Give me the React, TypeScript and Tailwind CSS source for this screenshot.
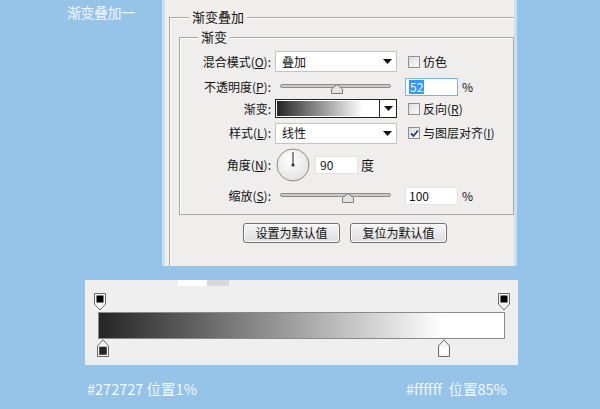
import React from "react";

const ui = { fontFamily: '"Noto Sans CJK SC", "Noto Sans", sans-serif' };

function Arrow() {
  return (
    <svg width="9" height="5" viewBox="0 0 9 5">
      <path d="M0 0 L9 0 L4.5 5 Z" fill="#111" />
    </svg>
  );
}

function Select({ value }: { value: string }) {
  return (
    <div className="flex items-center justify-between w-[122px] h-[21px] bg-white border border-[#c4c4c4] pl-[6px] pr-[4px]">
      <span className="text-[12px] text-[#111]">{value}</span>
      <Arrow />
    </div>
  );
}

function Check({ checked, label }: { checked?: boolean; label: React.ReactNode }) {
  return (
    <div className="flex items-center gap-[3px]">
      <div className="w-[12px] h-[12px] border border-[#8e8f8f] bg-gradient-to-br from-[#dcdcdc] to-[#fbfbfb] flex items-center justify-center">
        {checked && (
          <svg width="9" height="9" viewBox="0 0 9 9">
            <path d="M1 4.5 L3.5 7 L8 1.5" stroke="#23407a" strokeWidth="1.8" fill="none" />
          </svg>
        )}
      </div>
      <span className="text-[12px] text-[#111]">{label}</span>
    </div>
  );
}

function Slider({ pos }: { pos: number }) {
  return (
    <div className="relative w-[122px] h-[18px] px-[5px] flex items-center">
      <div className="w-[111px] h-[4px] rounded-[2px] border border-[#8d8d8d] bg-[#c9c9c9] mt-[-3px]" />
      <svg className="absolute top-[6px]" style={{ left: pos - 6 }} width="12" height="10" viewBox="0 0 12 10">
        <path d="M0.5 9.5 L0.5 5 L6 0.5 L11.5 5 L11.5 9.5 Z" fill="#e4e4e4" stroke="#7a7a7a" />
      </svg>
    </div>
  );
}

function Label({ children }: { children: React.ReactNode }) {
  return <div className="w-[92px] text-right text-[12px] text-[#111] pr-[1px]">{children}</div>;
}

function Field({ value, selected }: { value: string; selected?: boolean }) {
  return (
    <div
      className={
        "w-[53px] h-[18px] bg-white flex items-center px-[3px] text-[12px] " +
        (selected ? "border border-[#7eb4ea]" : "border border-[#e4e4e4]")
      }
    >
      {selected ? <span className="bg-[#3399ff] text-white leading-[14px] px-[1px]">{value}</span> : <span className="text-[#111]">{value}</span>}
    </div>
  );
}

function Button({ children }: { children: React.ReactNode }) {
  return (
    <div className="h-[20px] w-[97px] rounded-[3px] border border-[#707070] bg-gradient-to-b from-[#f6f6f6] to-[#dedede] flex items-center justify-center text-[12px] text-[#111] shadow-[inset_0_0_0_1px_#fcfcfc]">
      {children}
    </div>
  );
}

function StopTop({ left }: { left: number }) {
  return (
    <svg className="absolute top-[13px]" style={{ left }} width="12" height="18" viewBox="0 0 12 18">
      <path d="M0.5 0.5 H11.5 V11 L6 17 L0.5 11 Z" fill="#f4f4f4" stroke="#6a6a6a" />
      <rect x="2.5" y="2.5" width="7" height="7" fill="#000" />
    </svg>
  );
}

function StopBottom({ left, color }: { left: number; color: string }) {
  return (
    <svg className="absolute top-[59px]" style={{ left }} width="12" height="18" viewBox="0 0 12 18">
      <path d="M0.5 17.5 H11.5 V7 L6 0.8 L0.5 7 Z" fill="#f4f4f4" stroke="#6a6a6a" />
      <rect x="2.5" y="8" width="7" height="7.5" fill={color} stroke={color === "#fff" ? "#fff" : "#1a1a1a"} strokeWidth="0.5" />
    </svg>
  );
}

export default function App() {
  return (
    <div className="w-[600px] h-[409px] bg-[#96c3e8] overflow-hidden" style={ui}>
      <div className="flex items-start">
        <div className="w-[162px] pl-[67px] pt-[2px] text-[14px] text-[#f0f6fc] tracking-[-0.5px]">渐变叠加一</div>
        <div className="w-[355px] h-[266px] bg-[#f1eeeb] border-l-[3px] border-r-[3px] border-l-[#c9dff2] border-r-[#c9dff2] pt-[17px] pl-[4px]">
          <div className="relative h-[249px] border-t border-l border-[#a8a8a8] shadow-[inset_1px_1px_0_#ffffff] bg-[#efeeec] pt-[19px] pl-[9px]">
            <span className="absolute top-[-10px] left-[19px] px-[3px] bg-[#f1eeeb] text-[13px] leading-[18px] text-[#111]">渐变叠加</span>
            <div className="relative w-[335px] h-[178px] border border-[#a8a8a8] shadow-[inset_1px_1px_0_#ffffff] pt-[13px]">
              <span className="absolute top-[-10px] left-[18px] px-[3px] bg-[#efeeec] text-[13px] leading-[18px] text-[#111]">渐变</span>

              <div className="flex items-center h-[21px]">
                <Label>
                  混合模式(<u>O</u>):
                </Label>
                <div className="ml-[3px]">
                  <Select value="叠加" />
                </div>
                <div className="ml-[11px]">
                  <Check label="仿色" />
                </div>
              </div>

              <div className="flex items-center h-[18px] mt-[6px]">
                <Label>
                  不透明度(<u>P</u>):
                </Label>
                <div className="ml-[3px]">
                  <Slider pos={62} />
                </div>
                <div className="ml-[8px]">
                  <Field value="52" selected />
                </div>
                <span className="ml-[4px] text-[12px] text-[#111]">%</span>
              </div>

              <div className="flex items-center h-[19px] mt-[3px]">
                <Label>渐变:</Label>
                <div className="ml-[3px] w-[122px] h-[19px] border border-[#222] flex">
                  <div className="flex-1 bg-white p-[1px]">
                    <div className="w-full h-full bg-[linear-gradient(to_right,#272727_1%,#ffffff_85%)]" />
                  </div>
                  <div className="w-[17px] border-l border-[#222] bg-white flex items-center justify-center">
                    <Arrow />
                  </div>
                </div>
                <div className="ml-[11px]">
                  <Check
                    label={
                      <>
                        反向(<u>R</u>)
                      </>
                    }
                  />
                </div>
              </div>

              <div className="flex items-center h-[20px] mt-[5px]">
                <Label>
                  样式(<u>L</u>):
                </Label>
                <div className="ml-[3px]">
                  <Select value="线性" />
                </div>
                <div className="ml-[11px]">
                  <Check
                    checked
                    label={
                      <>
                        与图层对齐(<u>I</u>)
                      </>
                    }
                  />
                </div>
              </div>

              <div className="flex items-center h-[34px] mt-[5px]">
                <Label>
                  角度(<u>N</u>):
                </Label>
                <svg className="ml-[4px]" width="34" height="34" viewBox="0 0 34 34">
                  <defs>
                    <radialGradient id="dialg" cx="40%" cy="35%" r="70%">
                      <stop offset="0%" stopColor="#ffffff" />
                      <stop offset="100%" stopColor="#e2e2e2" />
                    </radialGradient>
                  </defs>
                  <circle cx="17" cy="17" r="16" fill="url(#dialg)" stroke="#8a8a8a" />
                  <line x1="17" y1="17" x2="17" y2="4" stroke="#444" strokeWidth="1.2" />
                  <circle cx="17" cy="17" r="1.6" fill="#333" />
                </svg>
                <div className="ml-[5px] w-[43px] h-[18px] bg-white border border-[#e4e4e4] flex items-center px-[4px] text-[12px] text-[#111]">
                  90
                </div>
                <span className="ml-[3px] text-[13px] text-[#111]">度</span>
              </div>

              <div className="flex items-center h-[18px] mt-[5px]">
                <Label>
                  缩放(<u>S</u>):
                </Label>
                <div className="ml-[3px]">
                  <Slider pos={73} />
                </div>
                <div className="ml-[8px]">
                  <Field value="100" />
                </div>
                <span className="ml-[4px] text-[12px] text-[#111]">%</span>
              </div>
            </div>

            <div className="flex gap-[10px] mt-[8px] ml-[64px]">
              <Button>设置为默认值</Button>
              <Button>复位为默认值</Button>
            </div>
          </div>
        </div>
      </div>

      <div className="relative ml-[85px] mt-[14px] w-[433px] h-[85px] bg-[#efefef] border-b-[6px] border-[#e9eef3]">
        <div className="flex ml-[93px] h-[6px]">
          <div className="w-[29px] bg-white" />
          <div className="w-[22px] bg-[#d9d9d9]" />
        </div>
        <StopTop left={9} />
        <StopTop left={413} />
        <div className="absolute left-[13px] top-[32px] w-[407px] h-[27px] border border-[#8a8a8a] bg-[linear-gradient(to_right,#272727_1%,#ffffff_85%)]" />
        <StopBottom left={12} color="#272727" />
        <StopBottom left={353} color="#fff" />
      </div>

      <div className="flex mt-[13px] text-[14.5px] text-[#f2f8fd]">
        <div className="ml-[87px] w-[319px]">#272727 位置1%</div>
        <div>#ffffff&nbsp; 位置85%</div>
      </div>
    </div>
  );
}
